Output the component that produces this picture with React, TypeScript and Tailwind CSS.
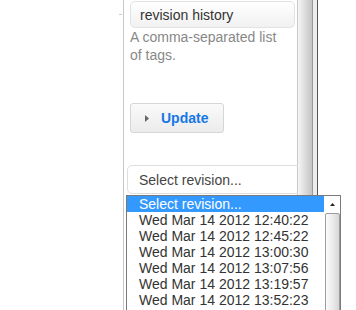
const revisions = [
  "Wed Mar 14 2012 12:40:22",
  "Wed Mar 14 2012 12:45:22",
  "Wed Mar 14 2012 13:00:30",
  "Wed Mar 14 2012 13:07:56",
  "Wed Mar 14 2012 13:19:57",
  "Wed Mar 14 2012 13:52:23",
];

export default function App() {
  return (
    <div className="relative w-[356px] h-[310px] overflow-hidden bg-white font-['Liberation_Sans',Arial,sans-serif] text-[14px]">
      <div className="flex h-full">
        {/* empty left side with a small tick */}
        <div className="w-[123px] shrink-0 pt-[14px]">
          <div className="ml-[119px] w-[3px] h-px bg-[#cfcfcf]" />
        </div>

        {/* form panel */}
        <div className="w-[175px] shrink-0 border-l border-r border-[#c8c8c8] h-full">
          <div className="ml-[6px] mt-px w-[165px] h-[27px] rounded-[5px] border border-[#e2e2e2] bg-gradient-to-b from-white to-[#f1f1f1] flex items-center pl-[9px] text-[#333] leading-none">
            revision history
          </div>
          <p className="ml-[6px] w-[155px] leading-[18px] text-[#888]">
            A comma-separated list of tags.
          </p>

          <button
            type="button"
            className="ml-[6px] mt-[39px] w-[94px] h-[30px] rounded-[3px] border border-[#d6d6d6] bg-gradient-to-b from-[#fafafa] to-[#ececec] flex items-center"
          >
            <svg className="ml-[14px] w-[4px] h-[7px]" viewBox="0 0 4 7">
              <path d="M0 0 L4 3.5 L0 7 Z" fill="#666" />
            </svg>
            <span className="ml-[12px] font-bold text-[#1677e6] leading-none">Update</span>
          </button>

          <div className="ml-[3px] mt-[32px] w-[174px] h-[29px] rounded-l-[5px] border border-[#dedede] flex items-center pl-[11px] text-[#444] leading-none">
            Select revision...
          </div>
        </div>

        {/* frame edge */}
        <div className="w-[14px] shrink-0 h-full bg-gradient-to-r from-[#f6f6f6] via-[#dcdcdc] to-[#c4c4c4]" />
        <div className="w-px shrink-0 h-full bg-[#9a9a9a]" />
        <div className="w-[4px] shrink-0 h-full bg-[#ececec]" />
        <div className="w-px shrink-0 h-full bg-[#555]" />
      </div>

      {/* open dropdown list */}
      <div className="absolute left-[126px] top-[195px] w-[215px] h-[130px] border border-[#7a7a7a] bg-white flex">
        <div className="w-[197px]">
          <div className="h-[16px] bg-[#3399ff] text-white pl-[12px] leading-[16px]">Select revision...</div>
          {revisions.map((r) => (
            <div key={r} className="h-[16px] pl-[12px] leading-[16px] text-[#333]">
              {r}
            </div>
          ))}
        </div>
        <div className="w-[16px] flex flex-col">
          <div className="h-[17px] flex items-center justify-center">
            <svg className="w-[5px] h-[3px]" viewBox="0 0 5 3">
              <path d="M0 3 L2.5 0 L5 3 Z" fill="#222" />
            </svg>
          </div>
          <div className="ml-px flex-1 rounded-t-[2px] border border-[#9d9d9d] bg-gradient-to-r from-[#fbfbfb] via-[#ececec] to-[#d6d6d6]" />
        </div>
      </div>
    </div>
  );
}
